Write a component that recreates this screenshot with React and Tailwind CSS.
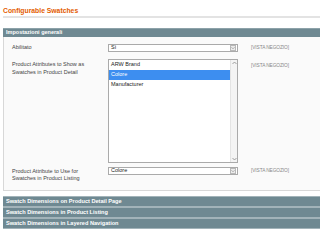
const bars = [
  'Swatch Dimensions on Product Detail Page',
  'Swatch Dimensions in Product Listing',
  'Swatch Dimensions in Layered Navigation',
]

const options = ['ARW Brand', 'Colore', 'Manufacturer']

function Arrow({ up }) {
  return (
    <svg width="5" height="4" viewBox="0 0 5 4" className="block">
      <path d={up ? 'M0.5 3 L2.5 1 L4.5 3' : 'M0.5 1 L2.5 3 L4.5 1'} fill="none" stroke="#8a8a8a" strokeWidth="0.8" />
    </svg>
  )
}

function Select({ value }) {
  return (
    <div className="w-[130px] h-[8px] bg-white border border-[#aaaaaa] flex items-center justify-between pl-[2px]">
      <span className="leading-none text-[5.5px] text-[#222]">{value}</span>
      <span className="w-[6px] h-[6px] mr-[1px] bg-[#ececec] border border-[#b8b8b8] flex items-center justify-center">
        <Arrow />
      </span>
    </div>
  )
}

function Scope() {
  return <span className="text-[4.8px] text-[#888] leading-none tracking-[-0.1px]">[VISTA NEGOZIO]</span>
}

export default function App() {
  return (
    <div className="w-[320px] h-[248px] bg-white font-['Liberation_Sans',Arial,sans-serif] overflow-hidden">
      <div className="ml-[3px] h-[18px] border-b-2 border-[#e3e3e3] pt-[8px]">
        <h3 className="text-[6.8px] font-bold text-[#e35c00] leading-none">Configurable Swatches</h3>
      </div>

      <div className="ml-[3px] mt-[10px]">
        <div className="h-[9px] bg-[#6f8992] border-t border-[#8da2a9] flex items-center pl-[3px]">
          <span className="text-[5.5px] font-bold text-white leading-none">Impostazioni generali</span>
        </div>

        <div className="h-[154px] bg-[#fafafa] border-l border-b border-[#d8d8d8] pl-[8px] pt-[7px] text-[5.5px] text-[#444]">
          <div className="flex items-center h-[8px]">
            <div className="w-[96px] leading-none">Abilitato</div>
            <Select value="Sì" />
            <div className="ml-[13px] flex items-center"><Scope /></div>
          </div>

          <div className="flex mt-[7px]">
            <div className="w-[96px] leading-[8px] pt-[1px]">
              <div>Product Attributes to Show as</div>
              <div>Swatches in Product Detail</div>
            </div>
            <div className="w-[130px] h-[104px] bg-white border border-[#aaaaaa] flex">
              <div className="flex-1">
                {options.map((o, i) => (
                  <div
                    key={o}
                    className={`h-[10px] flex items-center pl-[2px] leading-none ${
                      i === 1 ? 'bg-[#3d8ef0] text-white' : 'text-[#222]'
                    }`}
                  >
                    {o}
                  </div>
                ))}
              </div>
              <div className="w-[7px] bg-[#f4f4f4] border-l border-[#e4e4e4] flex flex-col justify-between items-center py-[1px]">
                <Arrow up />
                <Arrow />
              </div>
            </div>
            <div className="ml-[13px] pt-[2px]"><Scope /></div>
          </div>

          <div className="flex mt-[4px]">
            <div className="w-[96px] leading-[7px] pt-[1px]">
              <div>Product Attribute to Use for</div>
              <div>Swatches in Product Listing</div>
            </div>
            <Select value="Colore" />
            <div className="ml-[13px] flex items-center h-[8px]"><Scope /></div>
          </div>
        </div>

        <div className="mt-[5px] flex flex-col">
          {bars.map((b) => (
            <div key={b} className="h-[11px] bg-[#6f8992] border-t border-b-[0.5px] border-[#a2b3b9] flex items-center pl-[3px]">
              <span className="text-[5.6px] font-bold text-white leading-none">{b}</span>
            </div>
          ))}
        </div>
      </div>
    </div>
  )
}
